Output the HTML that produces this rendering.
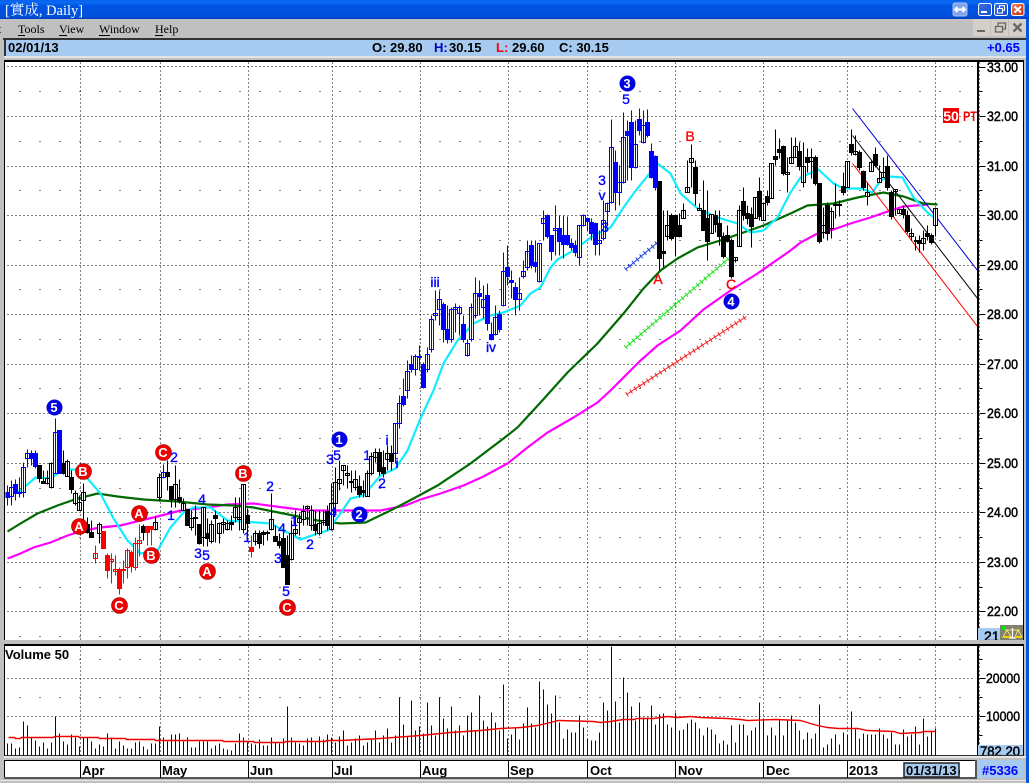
<!DOCTYPE html>
<html><head><meta charset="utf-8"><style>
html,body{margin:0;padding:0;background:#c0c0c0;width:1029px;height:783px;overflow:hidden}
svg{display:block;position:absolute;left:0;top:0}
text{font-family:"Liberation Sans","Noto Sans CJK TC",sans-serif}
.s{font-family:"Liberation Serif","Noto Serif CJK SC",serif}
.n{font-size:14px;fill:#0000ff;stroke:#0000ff;stroke-width:.35;text-anchor:middle}
.c{font-size:13px;font-weight:bold;fill:#fff;text-anchor:middle}
.r{font-size:14px;fill:#ff0000;stroke:#ff0000;stroke-width:.35;text-anchor:middle}
.ax{font-size:14px;fill:#000;stroke:#000;stroke-width:.5}
.b{font-size:13px;font-weight:bold;fill:#000}
.m{font-size:12px;fill:#000}
</style></head><body>
<svg width="1029" height="783" viewBox="0 0 1029 783" xmlns="http://www.w3.org/2000/svg">
<defs>
<linearGradient id="tb" x1="0" y1="0" x2="0" y2="1"><stop offset="0" stop-color="#0a62ee"/><stop offset=".15" stop-color="#0a6af2"/><stop offset=".3" stop-color="#0054e3"/><stop offset=".85" stop-color="#0050dc"/><stop offset="1" stop-color="#0040c0"/></linearGradient>
<linearGradient id="bb" x1="0" y1="0" x2="1" y2="1"><stop offset="0" stop-color="#3a70e8"/><stop offset="1" stop-color="#1a4cc8"/></linearGradient>
<linearGradient id="rb" x1="0" y1="0" x2="1" y2="1"><stop offset="0" stop-color="#f09070"/><stop offset=".5" stop-color="#e0502c"/><stop offset="1" stop-color="#c03010"/></linearGradient>
<clipPath id="c1"><rect x="978" y="628" width="22" height="12"/></clipPath>
<clipPath id="c2"><rect x="978" y="745" width="45" height="10"/></clipPath>
<clipPath id="c3"><rect x="5" y="62" width="972" height="578"/></clipPath>
</defs>
<rect width="1029" height="783" fill="#c0c0c0"/>
<rect x="1026" y="0" width="3" height="783" fill="#0a55e0"/>
<rect width="1029" height="19" fill="url(#tb)"/>
<text class="s" x="5" y="15" font-size="14.5" fill="#fff">[實成, Daily]</text>
<rect x="953" y="3" width="14" height="13" rx="2" fill="#7fa4ec" stroke="#a9c2f2"/>
<path d="M955 9.5h10M957.5 7l-2.5 2.5 2.5 2.5M962.5 7l2.5 2.5-2.5 2.5" stroke="#fff" stroke-width="2" fill="none"/>
<rect x="978.5" y="3.5" width="13" height="12" rx="2" fill="url(#bb)" stroke="#fff"/>
<rect x="981" y="11" width="6" height="2" fill="#fff"/>
<rect x="994.5" y="3.5" width="13" height="12" rx="2" fill="url(#bb)" stroke="#fff"/>
<path d="M997.5 8.5h5v4.5h-5zM999.5 8V5.8h5v4.5h-1.5" fill="none" stroke="#fff"/>
<rect x="1011.5" y="3.5" width="12.5" height="12" rx="2" fill="url(#rb)" stroke="#fff"/>
<path d="M1014.5 6.5l6.5 6M1021 6.5l-6.5 6" stroke="#fff" stroke-width="2"/>
<rect x="973" y="19" width="17" height="17" fill="#d4d0c8"/><rect x="991" y="19" width="17" height="17" fill="#d4d0c8"/><rect x="1009" y="19" width="17" height="17" fill="#d4d0c8"/>
<rect x="977" y="30" width="8" height="2" fill="#666"/>
<path d="M995.5 26.5h7v5.5h-7zM998 26v-3h7.5v6h-3" fill="none" stroke="#666" stroke-width="1.3"/>
<path d="M1013.5 23.5l8 8M1021.5 23.5l-8 8" stroke="#666" stroke-width="2.3"/>
<text class="s m" x="-2" y="33">t</text>
<text class="s m" x="18" y="33">Tools</text><rect x="18" y="35" width="7" height="1" fill="#000"/>
<text class="s m" x="59" y="33">View</text><rect x="59" y="35" width="8" height="1" fill="#000"/>
<text class="s m" x="99" y="33">Window</text><rect x="99" y="35" width="11" height="1" fill="#000"/>
<text class="s m" x="155" y="33">Help</text><rect x="155" y="35" width="8" height="1" fill="#000"/>
<rect x="3" y="38" width="1023" height="2" fill="#333"/>
<rect x="4" y="38" width="2" height="18" fill="#333"/>
<rect x="6" y="40" width="1020" height="16" fill="#a6caf0"/>
<rect x="4" y="56" width="1022" height="2" fill="#e4e4e4"/>
<text class="b" x="8" y="52">02/01/13</text>
<text class="b" x="372" y="52">O: 29.80</text>
<text class="b" x="434" y="52" fill="#0000ff" style="fill:#0000c0">H:</text><text class="b" x="449" y="52">30.15</text>
<text class="b" x="496" y="52" style="fill:#ff0000">L:</text><text class="b" x="512" y="52">29.60</text>
<text class="b" x="559" y="52">C: 30.15</text>
<text class="b" x="987" y="52" style="fill:#0000ff">+0.65</text>

<!-- main chart -->
<rect x="4" y="61" width="1019" height="579" fill="#fff"/>
<rect x="4" y="60" width="1020" height="2" fill="#000"/>
<rect x="4" y="60" width="1" height="580" fill="#000"/>
<rect x="1023" y="60" width="1" height="580" fill="#000"/>
<rect x="977" y="60" width="2" height="580" fill="#000"/>
<g transform="translate(.5 .5)" clip-path="url(#c3)">
<g stroke="#000" stroke-dasharray="1 3" fill="none">
<path d="M7 66H975M7 116H975M7 166H975M7 215H975M7 265H975M7 314H975M7 364H975M7 413H975M7 463H975M7 512H975M7 562H975M7 611H975"/>
<path d="M80 62V640M160 62V640M248 62V640M332 62V640M420 62V640M508 62V640M587 62V640M675 62V640M763 62V640M847 62V640M935 62V640"/>
</g>
<path d="M19 91H975M19 141H975M19 190H975M19 240H975M19 289H975M19 339H975M19 388H975M19 438H975M19 488H975M19 537H975M19 587H975M19 636H975" stroke="#000" stroke-dasharray="1 19" fill="none"/>
<!-- moving averages -->
<polyline fill="none" stroke="#ff00ff" stroke-width="2.2" points="7,558 20,553 33,547 50,542 67,535 83,530 100,527 120,525 140,520 157,516 180,510 207,507 227,504 253,503 283,507 307,510 340,510 380,510 405,505 420,499 440,493 463,485 483,476 507,463 527,447 547,432 573,417 597,402 610,390 627,373 640,360 657,345 680,330 703,309 730,290 757,273 790,250 800,242 817,233 833,229 850,223 870,217 890,210 903,206 928,204"/>
<polyline fill="none" stroke="#006a00" stroke-width="2.2" points="7,531 20,523 37,513 57,505 77,498 97,493 117,496 143,499 177,501 207,504 233,505 253,507 283,513 317,520 340,523 365,522 390,510 413,498 437,485 470,463 503,438 517,427 540,402 567,372 597,343 623,313 643,288 660,270 677,258 697,247 723,239 740,233 763,225 790,213 807,205 833,203 857,197 883,192 903,196 923,203 937,204"/>
<polyline fill="none" stroke="#11ecff" stroke-width="2.2" points="7,494 20,490 35,477 50,478 63,469 77,469 87,478 100,493 113,518 127,540 140,553 157,550 170,527 183,512 193,507 210,507 227,520 240,521 257,522 270,523 287,532 300,539 317,533 327,530 340,513 350,498 363,495 380,475 395,468 407,450 420,418 433,390 443,363 457,340 473,323 490,315 503,312 520,305 530,293 540,287 550,267 557,259 573,250 593,235 610,227 623,207 633,193 657,163 670,173 680,193 697,208 717,217 737,223 750,232 763,230 777,217 790,192 800,177 818,169 833,183 843,188 860,188 872,192 880,180 890,176 902,177 913,197 927,212 935,218"/>
<!-- trend lines -->
<path d="M852 108L977 270" stroke="#0000e0" fill="none"/>
<path d="M852 135L977 298" stroke="#000" fill="none"/>
<path d="M852 163L977 326" stroke="#f00" fill="none"/>
<!-- hatch lines -->
<path d="M625 269L657 242" stroke="#2040e0" fill="none"/><path d="M625 269L657 242" stroke="#2040e0" stroke-width="5" stroke-dasharray="1 4" fill="none"/>
<path d="M625 347L728 258" stroke="#20e020" fill="none"/><path d="M625 347L728 258" stroke="#20e020" stroke-width="5" stroke-dasharray="1 4" fill="none"/>
<path d="M626 394L746 316" stroke="#f02020" fill="none"/><path d="M626 394L746 316" stroke="#f02020" stroke-width="5" stroke-dasharray="1 4" fill="none"/>
<g shape-rendering="crispEdges">
<!-- black hollow -->
<path fill="#fff" stroke="#000" d="M47 470V484M45 478H49V483H45ZM51 462V488M49 463H53V487H49ZM67 459V476M65 461H69V476H65ZM75 490V505M73 493H77V503H73ZM79 495V510M77 502H81V510H77ZM83 483V523M81 492H85V500H81ZM99 522V543M97 524H101V533H97ZM155 516V530M153 522H157V529H153ZM159 473V501M157 477H161V497H157ZM175 465V507M173 484H177V499H173ZM183 498V510M181 503H185V510H181ZM191 510V530M189 518H193V527H189ZM195 505V535M193 517H197V518H193ZM203 507V546M201 507H205V537H201ZM211 520V543M209 524H213V541H209ZM219 522V543M217 523H221V533H217ZM223 518V533M221 522H225V524H221ZM227 520V530M225 523H229V529H225ZM235 497V522M233 507H237V517H233ZM239 497V530M237 517H241V519H237ZM243 484V533M241 484H245V529H241ZM255 530V545M253 533H257V541H253ZM271 493V530M269 519H273V529H269ZM291 520V560M289 533H293V559H289ZM295 510V535M293 529H297V533H293ZM299 513V535M297 518H301V522H297ZM303 505V525M301 511H305V519H301ZM307 505V525M305 506H309V508H305ZM311 505V530M309 510H313V525H309ZM319 510V535M317 523H321V533H317ZM323 510V525M321 520H325V522H321ZM331 483V530M329 503H333V529H329ZM335 467V513M333 482H337V503H333ZM339 460V490M337 479H341V483H337ZM343 465V485M341 465H345V470H341ZM347 465V488M345 473H349V475H345ZM351 470V492M349 481H353V482H349ZM355 470V490M353 479H357V487H353ZM367 470V496M365 473H369V496H365ZM371 452V475M369 456H373V473H369ZM375 448V462M373 452H377V457H373ZM387 445V470M385 453H389V459H385Z"/>
<path fill="#fff" stroke="#000" d="M667 210V240M665 225H669V236H665ZM683 203V218M681 210H685V218H681ZM687 160V192M685 187H689V192H685ZM691 144V187M689 158H693V162H689ZM699 203V210M697 208H701V210H697ZM711 214V233M709 214H713V233H709ZM735 257V262M733 257H737V260H733ZM739 205V246M737 210H741V246H737ZM755 197V218M753 197H757V218H753ZM763 203V220M761 203H765V220H761ZM771 163V198M769 163H773V198H769ZM787 157V192M785 172H789V174H785ZM791 137V163M789 157H793V163H789ZM795 137V157M793 146H797V157H793ZM803 142V187M801 166H805V182H801ZM811 148V178M809 157H813V161H809ZM823 207V238M821 225H825V232H821ZM831 207V238M829 211H833V228H829ZM835 183V218M833 204H837V205H833ZM839 200V216M837 204H841V205H837ZM847 161V187M845 161H849V187H845ZM855 135V155M853 151H857V154H853ZM867 182V205M865 192H869V196H865ZM871 160V171M869 162H873V171H869ZM879 165V182M877 178H881V182H877ZM883 157V177M881 172H885V177H881ZM895 189V215M893 189H897V191H893ZM899 209V213M897 209H901V213H897ZM911 228V240M909 233H913V236H909ZM923 230V250M921 238H925V243H921ZM935 208V236M933 208H937V225H933Z"/>
<!-- blue hollow -->
<path fill="#fff" stroke="#0000ff" d="M11 480V505M9 487H13V496H9ZM19 477V497M17 492H21V493H17ZM23 462V497M21 467H25V492H21ZM27 449V467M25 453H29V458H25ZM55 418V473M53 432H57V473H53ZM163 464V478M161 472H165V477H161ZM395 423V463M393 423H397V453H393ZM399 395V428M397 403H401V423H397ZM407 360V398M405 371H409V390H405ZM415 354V375M413 356H417V369H413ZM419 345V370M417 356H421V357H417ZM427 347V372M425 354H429V369H425ZM431 315V352M429 319H433V349H429ZM435 290V320M433 313H437V315H433ZM439 290V325M437 299H441V309H437ZM451 307V342M449 309H453V339H449ZM455 303V332M453 307H457V309H453ZM459 305V335M457 307H461V313H457ZM467 339V356M465 343H469V355H465ZM471 303V341M469 307H473V339H469ZM475 277V318M473 293H477V315H473ZM483 285V318M481 299H485V307H481ZM495 305V335M493 317H497V334H493ZM503 252V306M501 271H505V305H501ZM519 277V310M517 293H521V299H517ZM523 260V278M521 271H525V276H521ZM527 240V270M525 251H529V267H525ZM539 243V282M537 243H541V281H537ZM543 210V240M541 218H545V223H541ZM555 205V255M553 228H557V230H553ZM579 225V265M577 225H581V257H577ZM583 214V226M581 215H585V225H581ZM599 230V255M597 240H601V243H597ZM603 200V240M601 220H605V238H601ZM607 202V225M605 203H609V211H605ZM611 119V203M609 147H613V202H609ZM619 165V205M617 182H621V192H617ZM623 112V183M621 137H625V182H621ZM635 120V168M633 144H637V167H633ZM643 110V143M641 125H645V142H641Z"/>
<!-- red hollow -->
<path fill="#fff" stroke="#ff0000" d="M95 545V563M93 553H97V558H93ZM111 553V583M109 559H113V561H109ZM115 555V575M113 569H117V571H113ZM123 560V583M121 569H125V570H121ZM127 548V578M125 550H129V567H125ZM135 537V570M133 543H137V567H133ZM139 524V556M137 540H141V543H137Z"/>
<!-- black filled -->
<path fill="#000" stroke="#000" d="M39 465V482M37 465H41V478H37ZM43 470V483M41 481H45V483H41ZM63 450V474M61 463H65V473H61ZM71 470V493M69 477H73V489H69ZM87 517V533M85 524H89V532H85ZM91 520V537M89 532H93V537H89ZM143 524V540M141 526H145V532H141ZM167 460V490M165 472H169V476H165ZM171 486V507M169 486H173V499H169ZM179 479V503M177 497H181V501H177ZM187 509V525M185 509H189V525H185ZM199 525V544M197 524H201V543H197ZM207 518V546M205 533H209V538H205ZM215 510V542M213 515H217V518H213ZM231 515V530M229 522H233V524H229ZM247 508V535M245 515H249V523H245ZM259 530V548M257 533H261V543H257ZM263 530V545M261 532H265V534H261ZM267 530V540M265 532H269V533H265ZM275 525V541M273 536H277V541H273ZM279 533V548M277 541H281V545H277ZM283 530V567M281 538H285V567H281ZM287 535V584M285 555H289V584H285ZM315 510V535M313 524H317V530H313ZM327 505V530M325 511H329V525H325ZM359 475V497M357 486H361V494H357ZM363 480V497M361 490H365V492H361ZM379 448V475M377 452H381V471H377ZM383 450V477M381 467H385V473H381ZM391 445V470M389 453H393V461H389Z"/>
<path fill="#000" stroke="#000" d="M659 181V270M657 181H661V258H657ZM663 210V267M661 251H665V253H661ZM671 213V240M669 215H673V238H669ZM675 215V256M673 215H677V236H673ZM679 213V237M677 225H681V236H677ZM695 160V205M693 167H697V193H693ZM703 180V230M701 210H705V230H701ZM707 190V260M705 218H709V241H705ZM715 210V232M713 215H717V224H713ZM719 210V245M717 223H721V236H717ZM723 232V258M721 236H725V256H721ZM727 225V242M725 235H729V241H725ZM731 238V278M729 240H733V276H729ZM743 187V220M741 201H745V215H741ZM747 205V224M745 213H749V218H745ZM751 207V247M749 214H753V226H749ZM759 177V220M757 191H761V216H757ZM767 190V205M765 196H769V202H765ZM775 129V165M773 156H777V159H773ZM779 138V158M777 149H781V152H777ZM783 145V175M781 146H785V173H781ZM799 142V170M797 151H801V166H797ZM807 148V172M805 157H809V162H805ZM815 155V185M813 157H817V183H813ZM819 183V243M817 183H821V241H817ZM827 202V240M825 205H829V233H825ZM843 172V195M841 186H845V192H841ZM851 129V155M849 144H853V152H849ZM859 150V170M857 152H861V167H857ZM863 170V190M861 171H865V187H861ZM875 147V167M873 154H877V165H873ZM887 155V190M885 166H889V187H885ZM891 190V219M889 192H893V216H889ZM903 205V218M901 209H905V214H901ZM907 210V233M905 215H909V231H905ZM915 236V250M914 240H916V241H914ZM919 235V252M917 240H921V243H917ZM927 225V240M925 233H929V236H925ZM931 233V244M929 235H933V242H929Z"/>
<!-- blue filled -->
<path fill="#0000ff" stroke="#0000ff" d="M7 485V505M5 492H9V497H5ZM15 479V500M13 484H17V493H13ZM31 450V465M29 453H33V458H29ZM35 450V468M33 453H37V466H33ZM59 430V473M57 430H61V473H57ZM403 378V406M401 396H405V404H401ZM411 355V372M409 364H413V369H409ZM423 362V388M421 364H425V387H421ZM443 302V342M441 304H445V329H441ZM447 305V343M445 329H449V339H445ZM463 315V342M461 324H465V339H461ZM479 280V315M477 293H481V296H477ZM487 283V330M485 295H489V323H485ZM491 322V340M489 334H493V339H489ZM499 310V332M497 314H501V329H497ZM507 245V285M505 267H509V276H505ZM511 270V298M509 280H513V282H509ZM515 282V315M513 287H517V299H513ZM531 240V268M529 245H533V265H529ZM535 240V272M533 262H537V266H533ZM547 214V238M545 215H549V236H545ZM551 235V260M549 235H553V251H549ZM559 215V255M557 228H561V241H557ZM563 215V258M561 235H565V244H561ZM567 216V245M565 235H569V244H565ZM571 238V250M569 243H573V247H569ZM575 240V256M573 245H577V252H573ZM587 217V230M585 218H589V221H585ZM591 218V240M589 222H593V233H589ZM595 222V255M593 223H597V244H593ZM615 150V210M613 162H617V192H613ZM627 120V180M625 131H629V135H625ZM631 110V180M629 122H633V167H629ZM639 108V135M637 119H641V130H637ZM647 109V137M645 122H649V135H645ZM651 143V178M649 151H653V177H649ZM655 155V190M653 156H657V187H653Z"/>
<!-- red filled -->
<path fill="#ff0000" stroke="#ff0000" d="M103 531V548M101 531H105V548H101ZM107 553V578M105 555H109V570H105ZM119 567V594M117 569H121V588H117ZM131 550V572M129 552H133V566H129ZM147 526V545M145 526H149V532H145ZM151 526V545M149 526H153V529H149ZM251 535V557M249 547H253V551H249Z"/>
</g>
<!-- circles -->
<g fill="#f00000" stroke="#800" stroke-width=".6">
<circle cx="83" cy="471" r="8"/><circle cx="79" cy="526" r="8"/><circle cx="139" cy="513" r="8"/><circle cx="163" cy="452" r="8"/><circle cx="151" cy="555" r="8"/><circle cx="119" cy="605" r="8"/><circle cx="207" cy="571" r="8"/><circle cx="243" cy="473" r="8"/><circle cx="287" cy="607" r="8"/>
</g>
<g fill="#0000e0"><circle cx="54" cy="407" r="8"/><circle cx="339" cy="439" r="8"/><circle cx="359" cy="514" r="8"/><circle cx="627" cy="83" r="8"/><circle cx="731" cy="301" r="8"/></g>
</g>
<g>
<text class="c" x="83" y="476">B</text><text class="c" x="79" y="531">A</text><text class="c" x="139" y="518">A</text><text class="c" x="163" y="457">C</text><text class="c" x="151" y="560">B</text><text class="c" x="119" y="610">C</text><text class="c" x="207" y="576">A</text><text class="c" x="243" y="478">B</text><text class="c" x="287" y="612">C</text>
<text class="c" x="54" y="412">5</text><text class="c" x="339" y="444">1</text><text class="c" x="359" y="519">2</text><text class="c" x="627" y="88">3</text><text class="c" x="731" y="306">4</text>
<text class="n" x="174" y="462">2</text><text class="n" x="171" y="520">1</text><text class="n" x="202" y="504">4</text><text class="n" x="198" y="558">3</text><text class="n" x="206" y="560">5</text><text class="n" x="247" y="542">1</text><text class="n" x="270" y="491">2</text><text class="n" x="282" y="533">4</text><text class="n" x="278" y="563">3</text><text class="n" x="286" y="596">5</text><text class="n" x="294" y="526">1</text><text class="n" x="310" y="549">2</text><text class="n" x="330" y="464">3</text><text class="n" x="337" y="460">5</text><text class="n" x="333" y="517">4</text>
<text class="n" x="367" y="460">1</text><text class="n" x="387" y="445">i</text><text class="n" x="397" y="468">i</text><text class="n" x="382" y="488">2</text><text class="n" x="435" y="287">iii</text><text class="n" x="491" y="352">iv</text>
<text class="n" x="626" y="104">5</text><text class="n" x="602" y="185">3</text><text class="n" x="602" y="200">v</text><text class="n" x="605" y="232">3</text>
<text class="r" x="658" y="284">A</text><text class="r" x="690" y="141">B</text><text class="r" x="731" y="289">C</text>
<rect x="943" y="108" width="16" height="15" fill="#f00000"/>
<text x="951" y="121" font-size="14" font-weight="bold" fill="#fff" text-anchor="middle">50</text>
<text x="963" y="121" font-size="14" font-weight="bold" fill="#f00000" textLength="14" lengthAdjust="spacingAndGlyphs">PT</text>
</g>
<!-- price axis -->
<g transform="translate(.5 .5)">
<path d="M979 62V640" stroke="#000" stroke-dasharray="1 3" fill="none"/>
<path d="M979 67H985M979 116H985M979 166H985M979 215H985M979 265H985M979 314H985M979 364H985M979 413H985M979 463H985M979 512H985M979 562H985M979 611H985" stroke="#000" fill="none"/>
<path d="M979 91H982M979 141H982M979 190H982M979 240H982M979 289H982M979 339H982M979 388H982M979 438H982M979 488H982M979 537H982M979 587H982M979 636H982" stroke="#000" fill="none"/>
</g>
<g>
<text class="ax" x="987" y="72" textLength="31" lengthAdjust="spacingAndGlyphs">33.00</text>
<text class="ax" x="987" y="121" textLength="31" lengthAdjust="spacingAndGlyphs">32.00</text>
<text class="ax" x="987" y="171" textLength="31" lengthAdjust="spacingAndGlyphs">31.00</text>
<text class="ax" x="987" y="220" textLength="31" lengthAdjust="spacingAndGlyphs">30.00</text>
<text class="ax" x="987" y="270" textLength="31" lengthAdjust="spacingAndGlyphs">29.00</text>
<text class="ax" x="987" y="319" textLength="31" lengthAdjust="spacingAndGlyphs">28.00</text>
<text class="ax" x="987" y="369" textLength="31" lengthAdjust="spacingAndGlyphs">27.00</text>
<text class="ax" x="987" y="418" textLength="31" lengthAdjust="spacingAndGlyphs">26.00</text>
<text class="ax" x="987" y="468" textLength="31" lengthAdjust="spacingAndGlyphs">25.00</text>
<text class="ax" x="987" y="517" textLength="31" lengthAdjust="spacingAndGlyphs">24.00</text>
<text class="ax" x="987" y="567" textLength="31" lengthAdjust="spacingAndGlyphs">23.00</text>
<text class="ax" x="987" y="616" textLength="31" lengthAdjust="spacingAndGlyphs">22.00</text>
</g>
<rect x="978" y="628" width="22" height="12" fill="#a6caf0"/>
<g clip-path="url(#c1)"><text class="ax" x="984" y="641">21</text></g>
<rect x="1000" y="625" width="23" height="15" fill="#808070"/>
<rect x="1002" y="626" width="4" height="4" fill="#00e000"/>
<path d="M1005 630h15M1007 630l-4 7h8zM1018 630l-3 7h7z" stroke="#ffe060" fill="none"/>
<path d="M1012.5 628v10M1009 638h7" stroke="#fff" stroke-width="1.3" fill="none"/>
<path d="M1004 637h6M1015 637h6" stroke="#f0d000" stroke-width="2"/>

<!-- volume panel -->
<rect x="4" y="645" width="1019" height="110" fill="#fff"/>
<rect x="4" y="644" width="1020" height="2" fill="#000"/>
<rect x="4" y="644" width="1" height="111" fill="#000"/>
<rect x="1023" y="644" width="1" height="111" fill="#000"/>
<rect x="977" y="644" width="2" height="111" fill="#000"/>
<rect x="4" y="755" width="1020" height="1" fill="#333"/>
<rect x="4" y="756" width="1022" height="2" fill="#e6e6e6"/>
<g transform="translate(.5 .5)">
<path d="M7 678H975M7 716H975" stroke="#000" stroke-dasharray="1 3" fill="none"/>
<path d="M19 659H975M19 697H975" stroke="#000" stroke-dasharray="1 19" fill="none"/>
<path d="M80 646V755M160 646V755M248 646V755M332 646V755M420 646V755M508 646V755M587 646V755M675 646V755M763 646V755M847 646V755M935 646V755" stroke="#000" stroke-dasharray="1 3" fill="none"/>
<path stroke="#000080" fill="none" shape-rendering="crispEdges" d="M7 755V743M11 755V743M15 755V748M19 755V747M23 755V721M27 755V725M31 755V737M35 755V740M39 755V746M43 755V742M47 755V748M51 755V742M55 755V716M59 755V733M63 755V741M67 755V744M71 755V734M75 755V737M79 755V746M83 755V737M87 755V737M91 755V741M95 755V748M99 755V744M103 755V746M107 755V733M111 755V737M115 755V748M119 755V741M123 755V745M127 755V748M131 755V748M135 755V742M139 755V741M143 755V746M147 755V749M151 755V743M155 755V743M159 755V726M163 755V737M167 755V741M171 755V734M175 755V734M179 755V733M183 755V741M187 755V737M191 755V747M195 755V747M199 755V741M203 755V741M207 755V741M211 755V748M215 755V745M219 755V743M223 755V748M227 755V749M231 755V750M235 755V743M239 755V733M243 755V737M247 755V742M251 755V743M255 755V744M259 755V739M263 755V745M267 755V745M271 755V737M275 755V742M279 755V743M283 755V738M287 755V706M291 755V737M295 755V742M299 755V743M303 755V745M307 755V738M311 755V737M315 755V742M319 755V736M323 755V739M327 755V734M331 755V737M335 755V742M339 755V736M343 755V730M347 755V745M351 755V742M355 755V738M359 755V735M363 755V745M367 755V742M371 755V738M375 755V730M379 755V742M383 755V735M387 755V728M391 755V742M395 755V735M399 755V697M403 755V724M407 755V736M411 755V700M415 755V730M419 755V726M423 755V733M427 755V702M431 755V725M435 755V735M439 755V697M443 755V718M447 755V728M451 755V706M455 755V730M459 755V725M463 755V735M467 755V715M471 755V712M475 755V730M479 755V695M483 755V720M487 755V726M491 755V712M495 755V722M499 755V730M503 755V684M507 755V738M511 755V734M515 755V728M519 755V739M523 755V723M527 755V707M531 755V723M535 755V727M539 755V681M543 755V689M547 755V704M551 755V713M555 755V695M559 755V722M563 755V738M567 755V729M571 755V732M575 755V732M579 755V715M583 755V727M587 755V739M591 755V740M595 755V740M599 755V732M603 755V702M607 755V710M611 755V646M615 755V701M619 755V722M623 755V677M627 755V692M631 755V706M635 755V720M639 755V702M643 755V717M647 755V717M651 755V705M655 755V724M659 755V714M663 755V713M667 755V724M671 755V727M675 755V712M679 755V730M683 755V729M687 755V723M691 755V719M695 755V722M699 755V728M703 755V735M707 755V727M711 755V729M715 755V734M719 755V743M723 755V740M727 755V744M731 755V725M735 755V742M739 755V724M743 755V724M747 755V735M751 755V730M755 755V727M759 755V702M763 755V720M767 755V735M771 755V727M775 755V735M779 755V720M783 755V735M787 755V720M791 755V715M795 755V722M799 755V730M803 755V739M807 755V732M811 755V738M815 755V733M819 755V704M823 755V747M827 755V744M831 755V738M835 755V734M839 755V744M843 755V732M847 755V734M851 755V711M855 755V729M859 755V738M863 755V733M867 755V734M871 755V734M875 755V734M879 755V728M883 755V734M887 755V738M891 755V732M895 755V744M899 755V744M903 755V729M907 755V736M911 755V734M915 755V726M919 755V744M923 755V718M927 755V736M931 755V730M935 755V728"/>
<polyline fill="none" stroke="#f00000" stroke-width="1.4" points="8,737 14,737 15,738 20,738 21,737 53,737 54,736 78,736 79,737 98,737 99,738 125,738 126,739 154,739 155,740 222,740 223,741 253,741 254,742 284,742 285,741 325,741 326,740 340,740 380,738 420,735 450,732 480,730 500,728 521,727 537,725 550,722 558,720 593,721 600,722 610,721 623,719 633,719 637,718 653,718 667,716 677,717 690,716 700,717 727,718 740,719 747,720 775,719 800,720 810,723 817,725 827,727 838,728 857,728 867,730 893,731 900,733 920,732 923,731 935,731"/>
<path d="M979 646V745" stroke="#000" stroke-dasharray="1 3" fill="none"/>
<path d="M979 678H985M979 716H985M979 659H982M979 697H982M979 735H982" stroke="#000" fill="none"/>
</g>
<text x="5" y="659" font-size="13" font-weight="bold" fill="#000">Volume 50</text>
<text class="ax" x="986" y="683" textLength="34" lengthAdjust="spacingAndGlyphs">20000</text>
<text class="ax" x="986" y="721" textLength="34" lengthAdjust="spacingAndGlyphs">10000</text>
<rect x="978" y="745" width="45" height="10" fill="#a6caf0"/>
<g clip-path="url(#c2)"><text class="ax" x="980" y="756" textLength="40" lengthAdjust="spacingAndGlyphs">782 20</text></g>

<!-- x axis -->
<rect x="4" y="760" width="972" height="18" fill="#fff"/>
<path d="M4 760.5H976M4.5 760V778" stroke="#000" fill="none"/>
<rect x="4" y="777" width="972" height="2" fill="#555"/>
<rect x="975" y="760" width="2" height="19" fill="#555"/>
<path d="M80.5 760V778M160.5 760V778M248.5 760V778M332.5 760V778M420.5 760V778M508.5 760V778M587.5 760V778M675.5 760V778M763.5 760V778M847.5 760V778M959.5 770V774" stroke="#000" fill="none"/>
<g font-size="13" font-weight="bold" fill="#000">
<text x="82" y="775">Apr</text><text x="162" y="775">May</text><text x="250" y="775">Jun</text><text x="334" y="775">Jul</text><text x="422" y="775">Aug</text><text x="510" y="775">Sep</text><text x="590" y="775">Oct</text><text x="678" y="775">Nov</text><text x="766" y="775">Dec</text><text x="849" y="775">2013</text>
</g>
<rect x="904" y="763" width="55" height="14" fill="#a6caf0" stroke="#222" stroke-width="1.5"/>
<text class="b" x="906" y="775">01/31/13</text>
<rect x="977" y="760" width="46" height="18" fill="#a6caf0"/>
<text x="982" y="775" font-size="13" font-weight="bold" fill="#0000ff">#5336</text>
<rect x="0" y="780" width="1026" height="1" fill="#e6e6e6"/>
</svg>
</body></html>
